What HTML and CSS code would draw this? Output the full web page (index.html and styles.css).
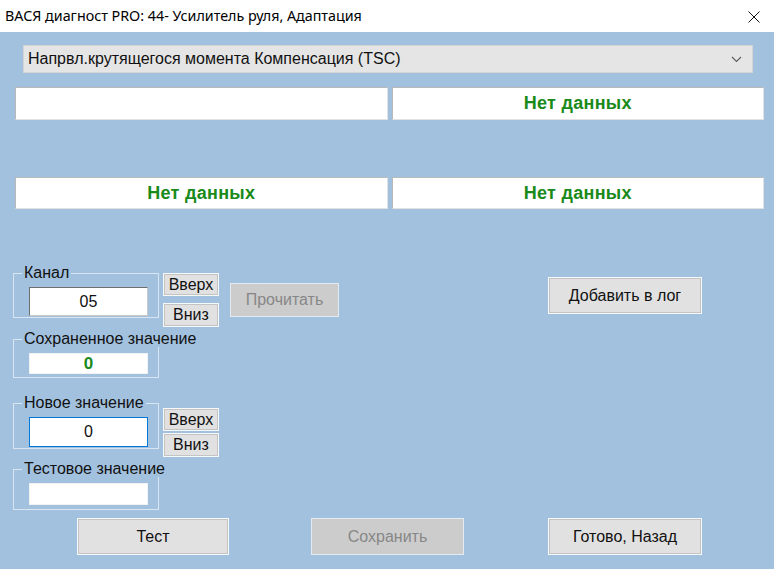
FILE: index.html
```html
<!DOCTYPE html>
<html lang="ru">
<head>
<meta charset="UTF-8">
<meta name="viewport" content="width=device-width, initial-scale=1.0">
<title>ВАСЯ диагност PRO: 44- Усилитель руля, Адаптация</title>
<link rel="stylesheet" href="styles.css">
</head>
<body>
<div class="okno">
    <div class="zagolovok">
        <span class="zagolovok-tekst">ВАСЯ диагност PRO: 44- Усилитель руля, Адаптация</span>
        <svg class="zakryt" width="12" height="12" viewBox="0 0 12 12">
            <path d="M0.5 0.5 L11.5 11.5 M11.5 0.5 L0.5 11.5" stroke="#111" stroke-width="1" fill="none"/>
        </svg>
    </div>
    <div class="klient">
        <div class="spisok">
            <span>Напрвл.крутящегося момента Компенсация (TSC)</span>
            <svg class="strelka" width="11" height="7" viewBox="0 0 11 7">
                <path d="M1 1 L5.5 5.5 L10 1" stroke="#606060" stroke-width="1.2" fill="none"/>
            </svg>
        </div>
        <div class="ryad-polei">
            <div class="pole"></div>
            <div class="pole zeleny">Нет данных</div>
        </div>
        <div class="ryad-polei vtoroi">
            <div class="pole zeleny">Нет данных</div>
            <div class="pole zeleny">Нет данных</div>
        </div>

        <div class="niz">
            <div class="levaya">
                <div class="gruppa-ryad">
                    <fieldset class="gruppa kanal">
                        <legend>Канал</legend>
                        <input type="text" class="vvod temny" value="05">
                    </fieldset>
                    <div class="strelki">
                        <button class="knopka malaya">Вверх</button>
                        <button class="knopka malaya">Вниз</button>
                    </div>
                </div>
                <div class="gruppa-ryad s-otstupom">
                    <fieldset class="gruppa sohranennoe">
                        <legend>Сохраненное значение</legend>
                        <div class="vvod plosky zeleny-nol">0</div>
                    </fieldset>
                </div>
                <div class="gruppa-ryad novoe-ryad">
                    <fieldset class="gruppa novoe">
                        <legend>Новое значение</legend>
                        <input type="text" class="vvod fokus" value="0">
                    </fieldset>
                    <div class="strelki nizhe">
                        <button class="knopka malaya">Вверх</button>
                        <button class="knopka malaya">Вниз</button>
                    </div>
                </div>
                <div class="gruppa-ryad s-otstupom">
                    <fieldset class="gruppa testovoe">
                        <legend>Тестовое значение</legend>
                        <div class="vvod plosky"></div>
                    </fieldset>
                </div>
            </div>
            <button class="knopka vyklyuchena prochitat" disabled>Прочитать</button>
            <button class="knopka bolshaya v-log">Добавить в лог</button>
        </div>

        <div class="knopki-niz">
            <button class="knopka bolshaya test">Тест</button>
            <button class="knopka bolshaya vyklyuchena sohranit" disabled>Сохранить</button>
            <button class="knopka bolshaya gotovo">Готово, Назад</button>
        </div>
    </div>
</div>
</body>
</html>
```

FILE: styles.css
```css
body {
    margin: 0;
    font-family: 'Liberation Sans', Arial, sans-serif;
    background: #a2c1df;
}
.okno {
    width: 774px;
    height: 569px;
    overflow: hidden;
}
.zagolovok {
    height: 32px;
    background: #fff;
    display: flex;
    align-items: center;
    justify-content: space-between;
    padding: 0 14px 0 5px;
    font-family: 'Noto Sans', sans-serif;
    font-size: 14.3px;
    color: #000;
}
.zagolovok-tekst {
    margin-top: -1px;
}
.zakryt {
    margin-top: 1px;
}
.klient {
    display: flex;
    flex-direction: column;
    align-items: flex-start;
}
.spisok {
    box-sizing: border-box;
    margin: 13px 0 0 23px;
    width: 730px;
    height: 28px;
    background: #e5e5e5;
    border: 1px solid #d4d4d4;
    display: flex;
    align-items: center;
    justify-content: space-between;
    padding: 0 10px 0 4px;
    font-size: 16px;
    color: #111;
}
.ryad-polei {
    margin: 14px 0 0 15px;
    width: 749px;
    display: flex;
    gap: 4px;
}
.ryad-polei.vtoroi {
    margin-top: 57px;
}
.pole {
    box-sizing: border-box;
    flex: 1;
    height: 33px;
    background: #fff;
    border: 1px solid #e2e2e2;
    border-top-color: #b9b9b9;
    border-left-color: #b9b9b9;
    display: flex;
    align-items: center;
    justify-content: center;
}
.vtoroi .pole {
    height: 32px;
}
.zeleny {
    color: #1a8a1a;
    font-weight: bold;
    font-size: 18px;
    letter-spacing: 0.3px;
}
.niz {
    margin: 56px 0 0 13px;
    display: flex;
    align-items: flex-start;
}
.levaya {
    display: flex;
    flex-direction: column;
}
.gruppa-ryad {
    display: flex;
    align-items: flex-start;
}
.gruppa-ryad.s-otstupom {
    margin-top: 4px;
}
.gruppa-ryad.novoe-ryad {
    margin-top: 17px;
}
.gruppa {
    box-sizing: border-box;
    width: 146px;
    min-width: 0;
    margin: 0;
    border: 1px solid #d9e5f1;
    padding: 6px 9px 1px 15px;
}
.gruppa legend {
    padding: 0 2px;
    margin-left: -7px;
    font-size: 16px;
    line-height: 16px;
    color: #111;
    white-space: nowrap;
    background: #a2c1df;
}
.sohranennoe {
    padding-bottom: 3px;
}
.testovoe {
    padding-bottom: 4px;
}
.vvod {
    box-sizing: border-box;
    display: block;
    width: 119px;
    height: 29px;
    margin: 0;
    padding: 0;
    background: #fff;
    font-family: 'Liberation Sans', Arial, sans-serif;
    font-size: 16px;
    color: #111;
    text-align: center;
    outline: none;
}
.vvod.temny {
    border: 1px solid #c8c8c8;
    border-top-color: #6e6e6e;
    border-left-color: #6e6e6e;
}
.vvod.fokus {
    height: 30px;
    border: 1px solid #0078d7;
}
.vvod.plosky {
    height: 21px;
    border: 1px solid #f2f2f2;
    line-height: 19px;
}
.testovoe .vvod.plosky {
    height: 22px;
}
.zeleny-nol {
    color: #1a8a1a;
    font-weight: bold;
    font-size: 17px;
}
.strelki {
    display: flex;
    flex-direction: column;
    gap: 7px;
    margin: 8px 0 0 4px;
}
.strelki.nizhe {
    margin-top: 13px;
    gap: 2px;
}
.knopka {
    box-sizing: border-box;
    font-family: 'Liberation Sans', Arial, sans-serif;
    font-size: 16px;
    color: #111;
    background: #e1e1e1;
    border: 1px solid #f6f8fa;
    box-shadow: inset 0 0 0 1px #c4c4c4;
    padding: 0;
    cursor: pointer;
}
.knopka.malaya {
    width: 56px;
    height: 23px;
    line-height: 20px;
}
.knopka.malaya + .knopka.malaya {
    height: 24px;
}
.knopka.bolshaya {
    width: 154px;
    height: 37px;
}
.knopka.vyklyuchena {
    background: #cccccc;
    color: #878787;
    border-color: #e4eaf0;
    box-shadow: none;
    cursor: default;
}
.prochitat {
    width: 109px;
    height: 34px;
    margin: 18px 0 0 11px;
}
.v-log {
    margin: 12px 0 0 209px;
}
.knopki-niz {
    display: flex;
    margin: 8px 0 0 77px;
}
.knopka.test {
    width: 152px;
}
.knopka.sohranit {
    width: 153px;
    margin-left: 82px;
}
.knopka.gotovo {
    margin-left: 84px;
}
```
